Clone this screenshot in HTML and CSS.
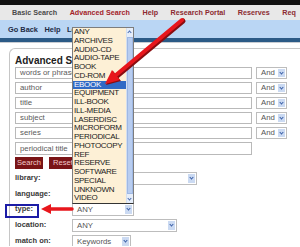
FILE: index.html
```html
<!DOCTYPE html>
<html lang="en">
<head>
    <meta charset="UTF-8">
    <title>Advanced Search</title>
    <link rel="stylesheet" href="styles.css">
</head>
<body>
    <div class="topbar"></div>
    <div class="nav">
        <span>Basic Search</span>
        <span class="active">Advanced Search</span>
        <span>Help</span>
        <span>Research Portal</span>
        <span>Reserves</span>
        <span>Req</span>
    </div>
    <div class="subnav">
        <span>Go Back</span>
        <span>Help</span>
        <span>Lo</span>
    </div>
    <div class="rule"></div>

    <div class="main">
        <div class="panel">
            <h2>Advanced Se</h2>

            <div class="row"><div class="field">words or phrase</div><div class="sel andsel">And<i></i></div></div>
            <div class="row"><div class="field">author</div><div class="sel andsel">And<i></i></div></div>
            <div class="row"><div class="field">title</div><div class="sel andsel">And<i></i></div></div>
            <div class="row"><div class="field">subject</div><div class="sel andsel">And<i></i></div></div>
            <div class="row"><div class="field">series</div><div class="sel andsel">And<i></i></div></div>
            <div class="row"><div class="field tall">periodical title</div></div>

            <div class="buttons">
                <span class="btn">Search</span>
                <span class="btn">Reset</span>
            </div>

            <div class="options">
                <label>library:</label><div class="sel w-lib"><i></i></div>
                <label>language:</label><div class="sel w-lang"><i></i></div>
                <label>type:</label><div class="sel w-type">ANY<i></i></div>
                <label>location:</label><div class="sel w-loc">ANY<i></i></div>
                <label>match on:</label><div class="sel w-match">Keywords<i></i></div>
            </div>
        </div>
    </div>

    <div class="dropdown">
        <ul>
            <li>ANY</li>
            <li>ARCHIVES</li>
            <li>AUDIO-CD</li>
            <li>AUDIO-TAPE</li>
            <li>BOOK</li>
            <li>CD-ROM</li>
            <li class="picked">EBOOK</li>
            <li>EQUIPMENT</li>
            <li>ILL-BOOK</li>
            <li>ILL-MEDIA</li>
            <li>LASERDISC</li>
            <li>MICROFORM</li>
            <li>PERIODICAL</li>
            <li>PHOTOCOPY</li>
            <li>REF</li>
            <li>RESERVE</li>
            <li>SOFTWARE</li>
            <li>SPECIAL</li>
            <li>UNKNOWN</li>
            <li>VIDEO</li>
        </ul>
        <div class="scroll">
            <b class="up"></b>
            <b class="thumb"></b>
            <b class="down"></b>
        </div>
    </div>

    <div class="typebox"></div>

    <svg class="arrows" width="300" height="247" viewBox="0 0 300 247">
        <!-- arrow to EBOOK -->
        <line x1="183" y1="21" x2="117" y2="76" stroke="#8a0d10" stroke-width="5" stroke-linecap="round"/>
        <polygon points="106,85 121,81 113,71" fill="#8a0d10"/>
        <line x1="182" y1="20" x2="116" y2="75" stroke="#e8161c" stroke-width="4" stroke-linecap="round"/>
        <polygon points="105,84 120,80 112,70" fill="#e8161c"/>
        <!-- arrow to type -->
        <line x1="72" y1="209" x2="50" y2="209" stroke="#e8161c" stroke-width="3.5" stroke-linecap="round"/>
        <polygon points="41,209 51,204 51,214" fill="#e8161c"/>
    </svg>
</body>
</html>
```

FILE: styles.css
```css
body {
    margin: 0;
    font-family: "Liberation Sans", Arial, sans-serif;
    background: #ffffff;
    overflow: hidden;
    position: relative;
    width: 300px;
    height: 247px;
}
.topbar {
    height: 5px;
    background: #111111;
}
.nav {
    height: 15px;
    background: #e8e8e8;
    display: flex;
    align-items: center;
    gap: 12.5px;
    padding-left: 12px;
    font-size: 7.2px;
    font-weight: bold;
    color: #8c2a30;
    white-space: nowrap;
    overflow: hidden;
}
.nav span:first-child {
    color: #4a4a4a;
}
.nav .active {
    color: #a3232a;
}
.subnav {
    height: 18px;
    background: #bad6f4;
    display: flex;
    align-items: center;
    gap: 6.5px;
    padding-left: 8px;
    font-size: 7.4px;
    font-weight: bold;
    color: #1d2b45;
}
.rule {
    height: 4px;
    background: #2b5a86;
    border-bottom: 1px solid #c8ccd2;
}
.main {
    padding: 5px 0 0 9px;
}
.panel {
    border: 1px solid #c6c6c6;
    border-right: none;
    border-bottom: none;
    border-radius: 6px 0 0 0;
    padding: 6px 0 0 5px;
    height: 191px;
    overflow: hidden;
}
.panel h2 {
    margin: 0;
    font-size: 10px;
    line-height: 12px;
    font-weight: bold;
    color: #222222;
}
.row {
    display: flex;
    gap: 4px;
    margin-bottom: 3px;
}
.field {
    width: 237px;
    height: 12px;
    box-sizing: border-box;
    border: 1px solid #b9b9b9;
    font-size: 7.8px;
    line-height: 10px;
    padding-left: 4px;
    color: #5a5a5a;
}
.field.tall {
    height: 13px;
    line-height: 11px;
}
.sel {
    position: relative;
    height: 13px;
    box-sizing: border-box;
    border: 1px solid #bdbdbd;
    background: #ffffff;
    font-size: 7.8px;
    line-height: 11px;
    padding-left: 4px;
    color: #555555;
}
.sel i {
    position: absolute;
    right: 1px;
    top: 1px;
    width: 7px;
    height: 9px;
    background: #cbdaf2;
}
.sel i::after {
    content: "";
    position: absolute;
    left: 2px;
    top: 2px;
    width: 2px;
    height: 2px;
    border-right: 1px solid #3a5fa8;
    border-bottom: 1px solid #3a5fa8;
    transform: rotate(45deg);
}
.andsel {
    width: 31px;
    height: 12px;
    line-height: 10px;
}
.andsel i {
    height: 8px;
}
.buttons {
    display: flex;
    gap: 6px;
    margin-top: -1px;
}
.btn {
    width: 28px;
    height: 12px;
    background: #7a1416;
    color: #f2c9c9;
    font-size: 7.6px;
    line-height: 12px;
    text-align: center;
}
.options {
    display: grid;
    grid-template-columns: 57px auto;
    grid-auto-rows: 13px;
    row-gap: 2.7px;
    margin-top: 3px;
    justify-items: start;
}
.options label {
    font-size: 7.5px;
    font-weight: bold;
    color: #383838;
    line-height: 11px;
}
.w-lib { width: 125px; }
.w-lang { width: 60px; }
.w-type { width: 62px; }
.w-loc { width: 105px; }
.w-match { width: 59px; }

.dropdown {
    position: absolute;
    left: 72px;
    top: 27px;
    width: 62px;
    height: 177px;
    box-sizing: border-box;
    border: 1px solid #7d7d7d;
    border-bottom-color: #333333;
    background: #fdf0d6;
    display: flex;
}
.dropdown ul {
    list-style: none;
    margin: 0;
    padding: 0;
    flex: 1;
}
.dropdown li {
    height: 8.75px;
    line-height: 8.75px;
    font-size: 8px;
    letter-spacing: -0.3px;
    padding-left: 1px;
    color: #1a1a1a;
}
.dropdown li.picked {
    background: #316ac5;
    color: #ffffff;
}
.scroll {
    width: 6px;
    display: flex;
    flex-direction: column;
    background: #e6eefa;
    border-left: 1px solid #d4dff0;
}
.scroll b {
    display: block;
}
.scroll .up, .scroll .down {
    height: 8px;
    position: relative;
}
.scroll .up::after, .scroll .down::after {
    content: "";
    position: absolute;
    left: 1px;
    width: 2px;
    height: 2px;
    border-right: 1px solid #4a6db0;
    border-bottom: 1px solid #4a6db0;
}
.scroll .up::after {
    top: 3px;
    transform: rotate(-135deg);
}
.scroll .down::after {
    top: 2px;
    transform: rotate(45deg);
}
.scroll .thumb {
    flex: 1;
    margin: 1px 0;
    background: #b8cdf0;
    border: 1px solid #9fb8e4;
}
.typebox {
    position: absolute;
    left: 5px;
    top: 204px;
    width: 34px;
    height: 14px;
    box-sizing: border-box;
    border: 2px solid #1c1ca6;
}
.arrows {
    position: absolute;
    left: 0;
    top: 0;
}
```
